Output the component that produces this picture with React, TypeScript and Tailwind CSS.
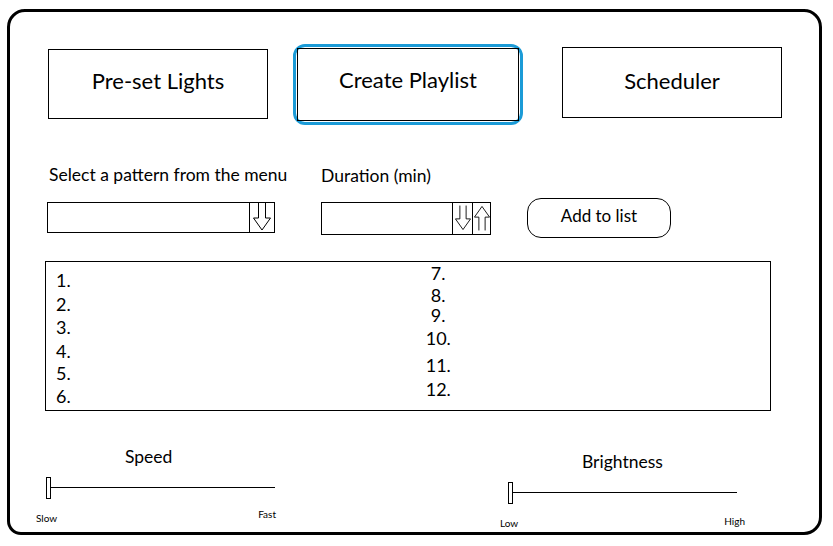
import React from 'react';

const font = { fontFamily: 'Lato, "Open Sans", sans-serif' };

const ArrowDown: React.FC<{ className?: string }> = ({ className }) => (
  <svg viewBox="0 0 18 28" className={className} fill="none" stroke="black" strokeWidth="1">
    <path d="M5.5 0 V15 H0.5 L9 27 L17.5 15 H12.5 V0" />
  </svg>
);

const ArrowUp: React.FC<{ className?: string }> = ({ className }) => (
  <svg viewBox="0 0 18 28" className={className} fill="none" stroke="black" strokeWidth="1">
    <path d="M5.5 28 V13 H0.5 L9 1 L17.5 13 H12.5 V28" />
  </svg>
);

const TabButton: React.FC<{ label: string; active?: boolean; className?: string }> = ({ label, active, className }) => {
  if (active) {
    return (
      <div className={`rounded-[12px] border-[3px] border-[#1b9bd7] p-[1px] ${className ?? ''}`}>
        <div className="w-full h-full border border-black flex items-center justify-center text-[22px] text-black pb-[10px]">
          {label}
        </div>
      </div>
    );
  }
  return (
    <div className={`border border-black flex items-center justify-center text-[22px] text-black pb-[4px] ${className ?? ''}`}>
      {label}
    </div>
  );
};

const Slider: React.FC<{ label: string; labelClass: string; className?: string }> = ({ label, labelClass, className }) => (
  <div className={`flex flex-col ${className ?? ''}`}>
    <div className={`text-[17.5px] leading-none ${labelClass}`}>{label}</div>
    <div className="relative h-[22px] w-[229px] mt-[12px]">
      <div className="absolute left-[4px] right-0 top-[10px] h-px bg-black" />
      <div className="absolute left-0 top-0 w-[5px] h-[22px] border border-black bg-white" />
    </div>
  </div>
);

export default function App() {
  const left: [string, string][] = [
    ['1.', 'mt-[9px]'],
    ['2.', 'mt-[6px]'],
    ['3.', 'mt-[5px]'],
    ['4.', 'mt-[6px]'],
    ['5.', 'mt-[4px]'],
    ['6.', 'mt-[5px]'],
  ];
  const right: [string, string][] = [
    ['7.', 'mt-[2px]'],
    ['8.', 'mt-[4px]'],
    ['9.', 'mt-[2px]'],
    ['10.', 'mt-[5px] -ml-[5px]'],
    ['11.', 'mt-[9px] -ml-[5px]'],
    ['12.', 'mt-[6px] -ml-[5px]'],
  ];

  return (
    <div className="w-[833px] h-[546px] bg-white pt-[9px] pl-[7px] text-black" style={font}>
      <div className="relative w-[815px] h-[526px] border-[3px] border-black rounded-[18px] rounded-bl-[14px]">
        {/* tabs */}
        <div className="flex items-start mt-[32px] ml-[38px]">
          <TabButton label="Pre-set Lights" className="w-[220px] h-[70px] mt-[5px] !pb-[8px]" />
          <TabButton label="Create Playlist" active className="w-[230px] h-[81px] ml-[25px]" />
          <TabButton label="Scheduler" className="w-[220px] h-[71px] ml-[39px] mt-[3px]" />
        </div>

        {/* labels */}
        <div className="flex mt-[41px] text-[17.5px] leading-none">
          <div className="ml-[39px] w-[272px]">Select a pattern from the menu</div>
          <div className="mt-[1px]">Duration (min)</div>
        </div>

        {/* inputs */}
        <div className="flex items-start mt-[17px]">
          <div className="ml-[37px] w-[228px] h-[31px] border border-black flex justify-end">
            <div className="w-[25px] h-full border-l border-black flex items-center justify-center">
              <ArrowDown className="w-[18px] h-[28px]" />
            </div>
          </div>
          <div className="ml-[46px] w-[170px] h-[33px] border border-black flex justify-end">
            <div className="w-[20px] h-full border-l border-black flex items-center justify-center">
              <ArrowDown className="w-[16px] h-[28px]" />
            </div>
            <div className="w-[18px] h-full border-l border-black flex items-center justify-center">
              <ArrowUp className="w-[16px] h-[28px]" />
            </div>
          </div>
          <div className="ml-[36px] -mt-[4px] w-[144px] h-[40px] border border-black rounded-[14px] flex items-center justify-center text-[17px] pb-[4px]">
            Add to list
          </div>
        </div>

        {/* playlist */}
        <div className="ml-[35px] mt-[23px] w-[726px] h-[150px] border border-black flex text-[18px]">
          <div className="flex flex-col ml-[10px]">
            {left.map(([n, cls]) => (
              <div key={n} className={`${cls} leading-[18px]`}>{n}</div>
            ))}
          </div>
          <div className="flex flex-col ml-[360px]">
            {right.map(([n, cls]) => (
              <div key={n} className={`${cls} leading-[18px]`}>{n}</div>
            ))}
          </div>
        </div>

        {/* sliders */}
        <div className="flex mt-[37px]">
          <div className="flex flex-col ml-[26px]">
            <Slider label="Speed" labelClass="ml-[79px]" className="ml-[10px]" />
            <div className="flex w-[240px] justify-between text-[10px] leading-none -mt-[5px]">
              <span className="mt-[19px]">Slow</span>
              <span className="mt-[15px]">Fast</span>
            </div>
          </div>
          <div className="flex flex-col ml-[224px] mt-[5px]">
            <Slider label="Brightness" labelClass="ml-[74px]" className="ml-[8px]" />
            <div className="flex w-[245px] justify-between text-[10px] leading-none -mt-[5px]">
              <span className="mt-[19px]">Low</span>
              <span className="mt-[17px]">High</span>
            </div>
          </div>
        </div>
      </div>
    </div>
  );
}
